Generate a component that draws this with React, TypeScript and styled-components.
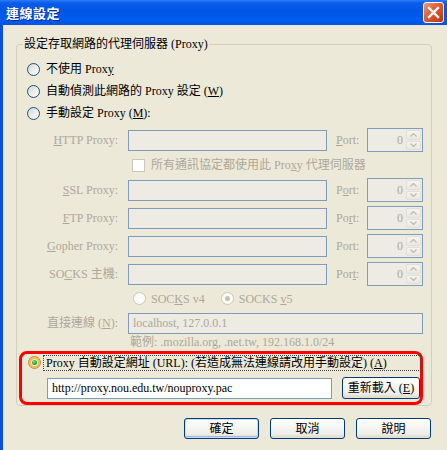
import React from "react";
import styled, { createGlobalStyle } from "styled-components";

const FONT = `"Liberation Serif", "Noto Sans CJK TC", serif`;
const DIS = "#ACA899";

const GlobalStyle = createGlobalStyle`
  html, body { margin: 0; padding: 0; background: #ECE9D8; }
  body { width: 447px; height: 450px; overflow: hidden; }
  * { box-sizing: border-box; }
`;

const Window = styled.div`
  width: 447px;
  height: 450px;
  display: flex;
  flex-direction: column;
  font-family: ${FONT};
  font-size: 12px;
  color: #000;
  overflow: hidden;
`;

const TitleBar = styled.div`
  height: 25px;
  flex: none;
  display: flex;
  align-items: center;
  justify-content: space-between;
  padding: 0 3px 0 6px;
  background: linear-gradient(
    to bottom,
    #2C7BF5 0%,
    #0A5DEB 12%,
    #0055E5 45%,
    #005CF0 80%,
    #0052E2 100%
  );
`;

const Title = styled.span`
  color: #fff;
  font-family: "Noto Sans CJK TC", sans-serif;
  font-weight: bold;
  font-size: 13px;
  line-height: 16px;
  letter-spacing: 0.5px;
  text-shadow: 1px 1px 0 #0A2A90;
`;

const CloseButton = styled.div`
  width: 21px;
  height: 21px;
  border: 1px solid #fff;
  border-radius: 3px;
  display: flex;
  align-items: center;
  justify-content: center;
  background: linear-gradient(135deg, #F09A7A 0%, #E2603A 40%, #CF4420 75%, #B93514 100%);
`;

const Frame = styled.div`
  flex: 1;
  display: flex;
  flex-direction: column;
  border-left: 3px solid #0B4FDC;
  background: #ECE9D8;
  padding: 12px 15px 0 13px;
`;

const Group = styled.fieldset`
  margin: 0;
  padding: 0;
  min-width: 0;
  border: 1px solid #D0D0BF;
  border-radius: 4px;
`;

const Legend = styled.legend`
  margin-left: 6px;
  padding: 0 1px;
  line-height: 14px;
  font-size: 12px;
`;

const ModeList = styled.div`
  padding-top: 7px;
  display: flex;
  flex-direction: column;
`;

const OptionRow = styled.div<{ $disabled?: boolean }>`
  height: 22px;
  display: flex;
  align-items: center;
  gap: 6px;
  padding-left: 10px;
  line-height: 14px;
  white-space: nowrap;
  color: ${(p) => (p.$disabled ? DIS : "#000")};
`;

const Key = styled.span`
  text-decoration: underline;
  text-underline-offset: 1px;
`;

const RadioDot = styled.span<{ $checked?: boolean; $disabled?: boolean; $hot?: boolean }>`
  width: 13px;
  height: 13px;
  flex: none;
  border-radius: 50%;
  display: flex;
  align-items: center;
  justify-content: center;
  border: 1px solid ${(p) => (p.$disabled ? "#CAC8BB" : p.$hot ? "#C08A30" : "#1C5180")};
  background: ${(p) =>
    p.$disabled
      ? "#FBFBF8"
      : "linear-gradient(135deg, #D6D6CF 0%, #EEEEEA 55%, #FFFFFF 100%)"};
  box-shadow: ${(p) => (p.$hot ? "inset 0 0 0 2px #F6BC4C" : "none")};
  &::after {
    content: "";
    display: ${(p) => (p.$checked ? "block" : "none")};
    width: 5px;
    height: 5px;
    border-radius: 50%;
    background: ${(p) =>
      p.$disabled
        ? "#C4C2B6"
        : "radial-gradient(circle at 35% 35%, #7BE07A 0%, #2BAE2B 55%, #178A17 100%)"};
  }
`;

const ManualSection = styled.div`
  margin-top: 4px;
  display: flex;
  flex-direction: column;
  color: ${DIS};
`;

const FieldRow = styled.div<{ $gapTop?: boolean }>`
  height: 24px;
  display: flex;
  align-items: center;
  white-space: nowrap;
  margin-top: ${(p) => (p.$gapTop ? "4px" : "0")};
`;

const FieldLabel = styled.span`
  width: 101px;
  margin-right: 10px;
  text-align: right;
  line-height: 14px;
  flex: none;
`;

const TextBox = styled.input<{ $w: number }>`
  width: ${(p) => p.$w}px;
  height: 21px;
  flex: none;
  margin: 0;
  padding: 0 4px;
  border: 1px solid #7F9DB9;
  border-radius: 0;
  background: #EDEBE4;
  font-family: ${FONT};
  font-size: 12px;
  color: ${DIS};
  -webkit-text-fill-color: ${DIS};
  outline: none;
  &:read-only:not(:disabled) {
    background: #fff;
    color: #000;
    -webkit-text-fill-color: #000;
  }
`;

const PortLabel = styled.span`
  width: 31px;
  margin-left: 9px;
  flex: none;
  line-height: 14px;
`;

const Spinner = styled.div`
  width: 56px;
  height: 24px;
  flex: none;
  display: flex;
  border: 1px solid #7F9DB9;
  background: #EDEBE4;
  padding: 1px;
`;

const SpinValue = styled.span`
  flex: 1;
  text-align: right;
  padding-right: 3px;
  line-height: 20px;
  color: ${DIS};
`;

const SpinButtons = styled.div`
  width: 15px;
  display: flex;
  flex-direction: column;
  gap: 1px;
`;

const SpinButton = styled.div`
  flex: 1;
  display: flex;
  align-items: center;
  justify-content: center;
  background: linear-gradient(to bottom, #F5F4EF, #EAE8E0);
  border: 1px solid #E2E0D6;
  border-radius: 2px;
`;

const CheckRow = styled.div`
  height: 26px;
  display: flex;
  align-items: center;
  gap: 6px;
  padding-left: 115px;
  white-space: nowrap;
  line-height: 14px;
`;

const CheckBox = styled.span`
  width: 13px;
  height: 13px;
  flex: none;
  border: 1px solid #CAC8BB;
  background: #fff;
`;

const VersionRow = styled.div`
  height: 17px;
  margin-top: 4px;
  display: flex;
  align-items: center;
  padding-left: 116px;
  white-space: nowrap;
  line-height: 14px;
`;

const VersionOption = styled.span<{ $offset?: boolean }>`
  display: flex;
  align-items: center;
  gap: 5px;
  margin-left: ${(p) => (p.$offset ? "16px" : "0")};
`;

const ExampleRow = styled.div`
  height: 14px;
  line-height: 14px;
  padding-left: 113px;
  white-space: nowrap;
`;

const Highlight = styled.div`
  margin: 2px 8px 0 2px;
  border: 3px solid #FF0000;
  border-radius: 8px;
  padding: 0 0 3px 0;
  display: flex;
  flex-direction: column;
`;

const AutoRow = styled.div`
  height: 17px;
  display: flex;
  align-items: center;
  padding-left: 6px;
  white-space: nowrap;
`;

const FocusLabel = styled.span`
  flex: 1;
  margin-left: 2px;
  margin-right: -1px;
  height: 16px;
  line-height: 14px;
  padding: 0 2px;
  border: 1px dotted #444;
`;

const UrlRow = styled.div`
  margin-top: 6px;
  display: flex;
  align-items: center;
  gap: 10px;
  padding-left: 25px;
`;

const XPButton = styled.button<{ $w: number; $h?: number; $default?: boolean }>`
  width: ${(p) => p.$w}px;
  height: ${(p) => p.$h ?? 21}px;
  margin: 0;
  padding: 0;
  border: 1px solid #003C74;
  border-radius: 3px;
  font-family: ${FONT};
  font-size: 12px;
  line-height: 14px;
  color: #000;
  white-space: nowrap;
  background: linear-gradient(to bottom, #FFFFFF 0%, #F6F6F2 40%, #EEEDE7 80%, #D8D3C8 100%);
  box-shadow: ${(p) =>
    p.$default
      ? "inset 0 0 0 1px #C5DBF7, inset 0 -1px 0 1px #9DB9EB"
      : "inset 0 -1px 0 #E3E0D6"};
`;

const ButtonBar = styled.div`
  margin-top: 12px;
  padding-right: 1px;
  display: flex;
  justify-content: flex-end;
  gap: 11px;
`;

const Chevron = ({ up }: { up?: boolean }) => (
  <svg width="7" height="4" viewBox="0 0 7 4">
    <path
      d={up ? "M0.5 3.5 L3.5 0.5 L6.5 3.5" : "M0.5 0.5 L3.5 3.5 L6.5 0.5"}
      fill="none"
      stroke="#BEBBAE"
      strokeWidth="1.2"
    />
  </svg>
);

const PortSpinner = () => (
  <Spinner>
    <SpinValue>0</SpinValue>
    <SpinButtons>
      <SpinButton>
        <Chevron up />
      </SpinButton>
      <SpinButton>
        <Chevron />
      </SpinButton>
    </SpinButtons>
  </Spinner>
);

type ProxyField = { label: React.ReactNode; port: React.ReactNode };

const proxyFields: ProxyField[] = [
  { label: <><Key>S</Key>SL Proxy:</>, port: <>P<Key>o</Key>rt:</> },
  { label: <><Key>F</Key>TP Proxy:</>, port: <>Po<Key>r</Key>t:</> },
  { label: <><Key>G</Key>opher Proxy:</>, port: <>Port:</> },
  { label: <>SO<Key>C</Key>KS 主機:</>, port: <>Por<Key>t</Key>:</> },
];

export default function App() {
  return (
    <>
      <GlobalStyle />
      <Window>
        <TitleBar>
          <Title>連線設定</Title>
          <CloseButton>
            <svg width="13" height="13" viewBox="0 0 13 13">
              <path d="M2 2 L11 11 M11 2 L2 11" stroke="#fff" strokeWidth="2.4" strokeLinecap="square" />
            </svg>
          </CloseButton>
        </TitleBar>
        <Frame>
          <Group>
            <Legend>設定存取網路的代理伺服器 (Proxy)</Legend>
            <ModeList>
              <OptionRow>
                <RadioDot />
                <span>
                  不使用 Prox<Key>y</Key>
                </span>
              </OptionRow>
              <OptionRow>
                <RadioDot />
                <span>
                  自動偵測此網路的 Proxy 設定 (<Key>W</Key>)
                </span>
              </OptionRow>
              <OptionRow>
                <RadioDot />
                <span>
                  手動設定 Proxy (<Key>M</Key>):
                </span>
              </OptionRow>
            </ModeList>
            <ManualSection>
              <FieldRow>
                <FieldLabel>
                  <Key>H</Key>TTP Proxy:
                </FieldLabel>
                <TextBox $w={199} disabled />
                <PortLabel>
                  <Key>P</Key>ort:
                </PortLabel>
                <PortSpinner />
              </FieldRow>
              <CheckRow>
                <CheckBox />
                <span>
                  所有通訊協定都使用此 Pro<Key>x</Key>y 代理伺服器
                </span>
              </CheckRow>
              {proxyFields.map((f, i) => (
                <FieldRow key={i} $gapTop={i > 0}>
                  <FieldLabel>{f.label}</FieldLabel>
                  <TextBox $w={199} disabled />
                  <PortLabel>{f.port}</PortLabel>
                  <PortSpinner />
                </FieldRow>
              ))}
              <VersionRow>
                <VersionOption>
                  <RadioDot $disabled />
                  <span>
                    SOC<Key>K</Key>S v4
                  </span>
                </VersionOption>
                <VersionOption $offset>
                  <RadioDot $disabled $checked />
                  <span>
                    SOCKS <Key>v</Key>5
                  </span>
                </VersionOption>
              </VersionRow>
              <FieldRow $gapTop>
                <FieldLabel>
                  直接連線 (<Key>N</Key>):
                </FieldLabel>
                <TextBox $w={295} disabled defaultValue="localhost, 127.0.0.1" />
              </FieldRow>
              <ExampleRow>範例: .mozilla.org, .net.tw, 192.168.1.0/24</ExampleRow>
            </ManualSection>
            <Highlight>
              <AutoRow>
                <RadioDot $checked $hot />
                <FocusLabel>
                  Proxy 自動設定網址 (URL): (若造成無法連線請改用手動設定) (<Key>A</Key>)
                </FocusLabel>
              </AutoRow>
              <UrlRow>
                <TextBox $w={285} readOnly defaultValue="http://proxy.nou.edu.tw/nouproxy.pac" />
                <XPButton $w={78} $h={22}>
                  重新載入 (<Key>E</Key>)
                </XPButton>
              </UrlRow>
            </Highlight>
          </Group>
          <ButtonBar>
            <XPButton $w={75} $default>
              確定
            </XPButton>
            <XPButton $w={75}>取消</XPButton>
            <XPButton $w={75}>說明</XPButton>
          </ButtonBar>
        </Frame>
      </Window>
    </>
  );
}
